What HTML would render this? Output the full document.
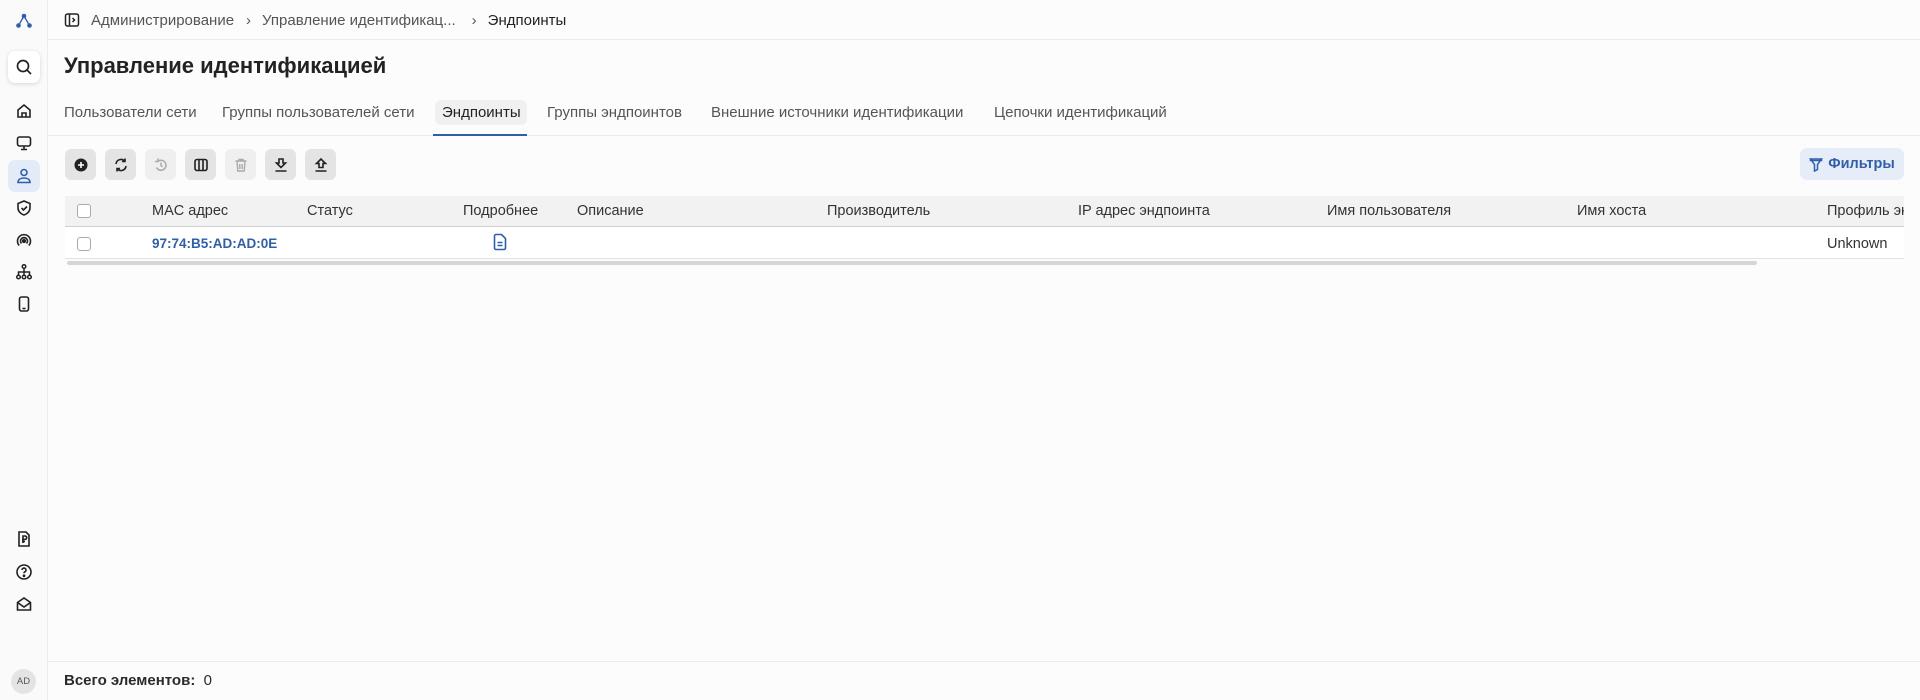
<!DOCTYPE html>
<html><head><meta charset="utf-8"><style>
*{box-sizing:border-box;margin:0;padding:0}
body{width:1920px;height:700px;background:#fcfcfc;font-family:"Liberation Sans","Noto Sans CJK SC",sans-serif;color:#2b2b2b;position:relative;overflow:hidden}
.abs{position:absolute}
.sb{left:0;top:0;width:48px;height:700px;border-right:1px solid #ececec;background:#fafafa}
.ic{position:absolute;left:14px;width:20px;height:20px}
svg{display:block}
.bc{top:10px;left:64px;height:20px;font-size:15px;color:#555;display:flex;align-items:center;white-space:nowrap}
.hl{left:48px;right:0;height:1px;background:#ececec}
.tabs span{position:absolute;top:104px;font-size:15px;color:#555;white-space:nowrap}
.btn{position:absolute;top:149px;width:31px;height:31px;border-radius:6px;background:#e4e4e4;display:flex;align-items:center;justify-content:center}
.btn.dis{background:#efefef}
.th{position:absolute;top:203px;font-size:14.5px;color:#333;white-space:nowrap}
.cb{position:absolute;left:77px;width:14px;height:14px;border:1.5px solid #aaa;border-radius:3px;background:#fff}
</style></head><body>
<div class="abs sb">
 <svg class="ic" style="top:11px" viewBox="0 0 20 20"><g fill="#2f5fa8"><circle cx="10" cy="5" r="2.3"/><circle cx="4.5" cy="14.5" r="2.3"/><circle cx="15.5" cy="14.5" r="2.3"/></g><path d="M10 5L4.5 14.5M10 5L15.5 14.5" stroke="#2f5fa8" stroke-width="1.3"/></svg>
 <div class="abs" style="left:8px;top:51px;width:32px;height:32px;background:#fff;border-radius:7px;box-shadow:0 1px 4px rgba(0,0,0,.15)"></div>
 <svg class="ic" style="top:57px" viewBox="0 0 20 20" fill="none" stroke="#222" stroke-width="1.7"><circle cx="9" cy="9" r="5.5"/><path d="M13 13l4 4"/></svg>
 <svg class="ic" style="top:101px" viewBox="0 0 20 20" fill="none" stroke="#222" stroke-width="1.6"><path d="M4 9l6-5 6 5v7H4z"/><path d="M8 16v-4h4v4"/></svg>
 <svg class="ic" style="top:133px" viewBox="0 0 20 20" fill="none" stroke="#222" stroke-width="1.6"><rect x="3.5" y="4" width="13" height="9" rx="2"/><path d="M10 13v3M7 16.5h6"/></svg>
 <div class="abs" style="left:8px;top:160px;width:32px;height:32px;background:#e3ebf8;border-radius:7px"></div>
 <svg class="ic" style="top:166px" viewBox="0 0 20 20" fill="none" stroke="#2f5fa8" stroke-width="1.6"><circle cx="10" cy="6.5" r="3"/><path d="M4 16.5c0-3 2.5-4.5 6-4.5s6 1.5 6 4.5z"/></svg>
 <svg class="ic" style="top:198px" viewBox="0 0 20 20" fill="none" stroke="#222" stroke-width="1.6"><path d="M10 3l6 2.5v4.5c0 3.5-3 6-6 7-3-1-6-3.5-6-7V5.5z"/><path d="M7.5 10l2 2 3.5-3.5"/></svg>
 <svg class="ic" style="top:230px" viewBox="0 0 20 20" fill="none" stroke="#222" stroke-width="1.6"><circle cx="10" cy="11" r="1.3" fill="#222"/><path d="M7.5 13.5a3.5 3.5 0 1 1 5 0M5.2 15.5a6.5 6.5 0 1 1 9.6 0"/></svg>
 <svg class="ic" style="top:262px" viewBox="0 0 20 20" fill="none" stroke="#222" stroke-width="1.5"><circle cx="10" cy="4.5" r="1.8"/><circle cx="4.5" cy="15" r="1.8"/><circle cx="10" cy="15" r="1.8"/><circle cx="15.5" cy="15" r="1.8"/><path d="M10 6.3V13M4.5 13v-3h11v3"/></svg>
 <svg class="ic" style="top:294px" viewBox="0 0 20 20" fill="none" stroke="#222" stroke-width="1.6"><rect x="5.5" y="3" width="9" height="14" rx="2"/><path d="M8.5 14.5h3"/></svg>
 <svg class="ic" style="top:529px" viewBox="0 0 20 20" fill="none" stroke="#222" stroke-width="1.6"><path d="M5 3h7l3 3v11H5z"/><path d="M9 14V7h2a1.7 1.7 0 0 1 0 3.4H8M8 12.5h3"/></svg>
 <svg class="ic" style="top:562px" viewBox="0 0 20 20" fill="none" stroke="#222" stroke-width="1.6"><circle cx="10" cy="10" r="7"/><path d="M8 8a2 2 0 1 1 2.5 2c-.5.2-.5.7-.5 1.3"/><circle cx="10" cy="13.8" r=".6" fill="#222"/></svg>
 <svg class="ic" style="top:594px" viewBox="0 0 20 20" fill="none" stroke="#222" stroke-width="1.6"><path d="M3.5 8.5L10 4l6.5 4.5V16h-13z"/><path d="M3.5 8.5L10 13l6.5-4.5"/></svg>
 <div class="abs" style="left:11px;top:669px;width:25px;height:25px;border-radius:50%;background:#e4e4e4;font-size:9.5px;color:#555;display:flex;align-items:center;justify-content:center">AD</div>
</div>

<div class="abs bc">
 <svg width="16" height="16" viewBox="0 0 16 16" fill="none" stroke="#222" stroke-width="1.5" style="margin-right:11px"><rect x="1.5" y="2" width="13" height="12" rx="2"/><path d="M5.5 2v12M8.5 6l2 2-2 2"/></svg>
 <span>Администрирование</span><span style="margin:0 11px 0 12px">›</span><span>Управление идентификац...</span><span style="margin:0 11px 0 16px">›</span><span style="color:#222">Эндпоинты</span>
</div>
<div class="abs hl" style="top:39px"></div>
<div class="abs" style="left:64px;top:53px;font-size:22px;font-weight:600;color:#222">Управление идентификацией</div>

<div class="tabs">
 <span style="left:64px">Пользователи сети</span>
 <span style="left:222px">Группы пользователей сети</span>
 <div class="abs" style="left:435px;top:100px;width:92px;height:25px;background:#f0f0f0;border-radius:6px"></div>
 <span style="left:442px;color:#222">Эндпоинты</span>
 <span style="left:547px">Группы эндпоинтов</span>
 <span style="left:711px">Внешние источники идентификации</span>
 <span style="left:994px">Цепочки идентификаций</span>
</div>
<div class="abs hl" style="top:135px"></div>
<div class="abs" style="left:433px;top:134px;width:94px;height:2px;background:#2f5fa8"></div>

<div class="btn" style="left:65px"><svg width="16" height="16" viewBox="0 0 16 16"><circle cx="8" cy="8" r="6.5" fill="#222"/><path d="M8 5v6M5 8h6" stroke="#fff" stroke-width="1.6"/></svg></div>
<div class="btn" style="left:105px"><svg width="16" height="16" viewBox="0 0 16 16" fill="none" stroke="#222" stroke-width="1.6"><path d="M3 7a5 5 0 0 1 9-2.5M13 9a5 5 0 0 1-9 2.5M12 1.5v3h-3M4 14.5v-3h3"/></svg></div>
<div class="btn dis" style="left:145px"><svg width="16" height="16" viewBox="0 0 16 16" fill="none" stroke="#aaa" stroke-width="1.5"><path d="M3.5 10.5A5 5 0 1 0 5 4.2M5 1.5v3H2"/><path d="M8 5.5v3l1.5 1.5"/></svg></div>
<div class="btn" style="left:185px"><svg width="16" height="16" viewBox="0 0 16 16" fill="none" stroke="#222" stroke-width="1.6"><rect x="2" y="2.5" width="12" height="11" rx="2"/><path d="M6 2.5v11M10 2.5v11"/></svg></div>
<div class="btn dis" style="left:225px"><svg width="16" height="16" viewBox="0 0 16 16" fill="none" stroke="#aaa" stroke-width="1.4"><path d="M2.5 4h11M6 4V2.5h4V4M4 4l.8 10h6.4L12 4M6.8 7v5M9.2 7v5"/></svg></div>
<div class="btn" style="left:265px"><svg width="16" height="16" viewBox="0 0 16 16" fill="none" stroke="#222" stroke-width="1.6"><path d="M6 2h4v4h2.5L8 10.5 3.5 6H6zM2.5 14h11"/></svg></div>
<div class="btn" style="left:305px"><svg width="16" height="16" viewBox="0 0 16 16" fill="none" stroke="#222" stroke-width="1.6"><path d="M6 10.5h4v-4h2.5L8 2 3.5 6.5H6zM2.5 14h11"/></svg></div>

<div class="abs" style="left:1800px;top:148px;width:104px;height:32px;background:#e6edf8;border-radius:7px;display:flex;align-items:center;justify-content:center;color:#2f5fa8;font-weight:600;font-size:14.5px">
 <svg width="14" height="15" viewBox="0 0 14 15" fill="none" stroke="#2f5fa8" stroke-width="1.5" style="margin-right:5px"><path d="M1.5 2h11L8.5 7.5v5l-3 1.5V7.5z"/><path d="M1.5 2v1.5h11V2"/></svg>Фильтры</div>

<div class="abs" style="left:65px;top:196px;width:1839px;height:31px;background:#f2f2f2;border-bottom:1px solid #d0d0d0"></div>
<div class="cb" style="top:204px"></div>
<span class="th" style="left:152px">MAC адрес</span>
<span class="th" style="left:307px">Статус</span>
<span class="th" style="left:463px">Подробнее</span>
<span class="th" style="left:577px">Описание</span>
<span class="th" style="left:827px">Производитель</span>
<span class="th" style="left:1078px">IP адрес эндпоинта</span>
<span class="th" style="left:1327px">Имя пользователя</span>
<span class="th" style="left:1577px">Имя хоста</span>
<span class="th" style="left:1827px;width:77px;overflow:hidden">Профиль эндпоинта</span>

<div class="abs" style="left:65px;top:227px;width:1839px;height:32px;background:#fff;border-bottom:1px solid #e2e2e2"></div>
<div class="cb" style="top:237px"></div>
<span class="th" style="left:152px;top:236px;color:#2f5fa8;font-weight:bold;font-size:13.5px">97:74:B5:AD:AD:0E</span>
<svg class="abs" style="left:492px;top:233px" width="16" height="18" viewBox="0 0 16 18" fill="none" stroke="#2f5fa8" stroke-width="1.6"><path d="M2.5 3a1.5 1.5 0 0 1 1.5-1.5h5.5l4 4V15a1.5 1.5 0 0 1-1.5 1.5H4A1.5 1.5 0 0 1 2.5 15z"/><path d="M5.5 9.5h5M5.5 12.5h5"/></svg>
<span class="th" style="left:1827px;top:236px">Unknown</span>
<div class="abs" style="left:67px;top:261px;width:1690px;height:4px;background:#d6d6d6;border-radius:2px"></div>

<div class="abs hl" style="top:661px"></div>
<div class="abs" style="left:64px;top:672px;font-size:15px"><b>Всего элементов:</b>&nbsp; 0</div>
</body></html>
